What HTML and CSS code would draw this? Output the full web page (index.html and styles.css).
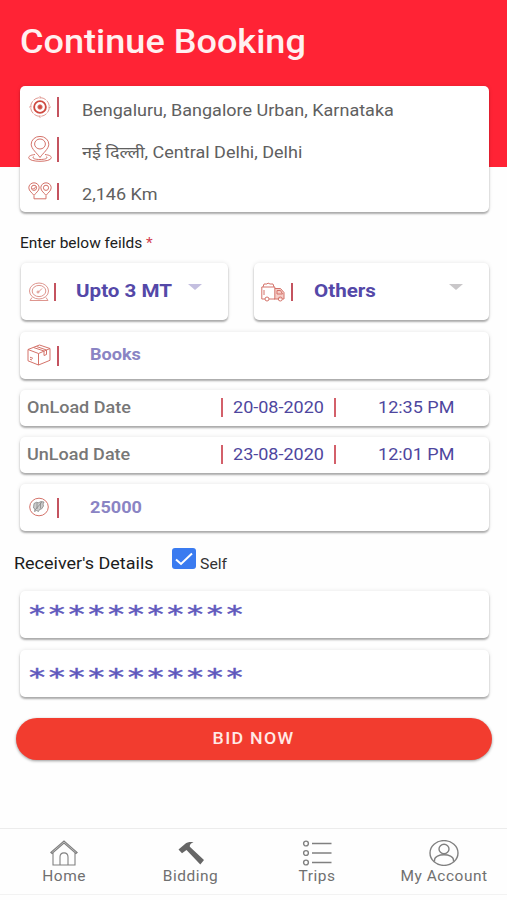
FILE: index.html
```html
<!DOCTYPE html>
<html lang="en">
<head>
<meta charset="utf-8">
<title>Continue Booking</title>
<link rel="stylesheet" href="styles.css">
</head>
<body>
<header class="hero"><h1 class="tx">Continue Booking</h1></header>
<main>
  <section class="card route">
    <div class="route-row first">
      <svg class="ic" viewBox="0 0 24 24"><circle cx="12" cy="12" r="10.200" stroke-dasharray="6.500 1.500" opacity=".8"/><circle cx="12" cy="12" r="6.400" stroke="#cf4a40" stroke-width="2"/><circle cx="12" cy="12" r="2.400" fill="#cf4a40"/><path d="M12 0v3M12 21v3M0 12h3M21 12h3" opacity=".7"/></svg>
      <i class="bar"></i><span class="tx">Bengaluru, Bangalore Urban, Karnataka</span>
    </div>
    <div class="route-row second">
      <svg class="ic tall" viewBox="0 0 24 26"><path d="M12 21.500C9 17 3.200 13 3.200 8.200a8.800 7.800 0 0 1 17.600 0C20.800 13 15 17 12 21.500z"/><ellipse cx="12" cy="8" rx="5.400" ry="5"/><path d="M7 18.500C3 19 .7 20 .7 21.700c0 4.800 22.600 4.800 22.600 0 0-1.700-2.300-2.700-6.300-3.200M6 20.500c-2 1-1 3 6 3s8-2 6-3" /></svg>
      <i class="bar tall"></i><span class="tx">नई दिल्ली, Central Delhi, Delhi</span>
    </div>
    <div class="route-row third">
      <svg class="ic short" viewBox="0 0 24 18"><path d="M6 13.500C4.500 11 .8 9 .8 5.800a5.200 5 0 0 1 10.400 0C11.200 9 7.500 11 6 13.500zM18 13.500c-1.500-2.500-5.200-4.500-5.200-7.700a5.200 5 0 0 1 10.400 0c0 3.200-3.700 5.200-5.200 7.700zM6 14v2.800h12V14"/><circle cx="6" cy="5.800" r="2.600"/><circle cx="18" cy="5.800" r="2.600"/><path d="M4.500 6l1.200 1.200L8 4.500"/></svg>
      <i class="bar short"></i><span class="tx">2,146 Km</span>
    </div>
  </section>

  <p class="hint"><span class="tx">Enter below feilds <b>*</b></span></p>

  <div class="selects">
    <div class="card select weight">
      <svg class="ic pale" viewBox="0 0 22 20"><ellipse cx="11" cy="9" rx="9.500" ry="8"/><ellipse cx="11" cy="9" rx="6.800" ry="5.600"/><path d="M10 10.500l4-4M4 15.500L2 18.500h18l-2-3M6 18.500h10"/><circle cx="10" cy="10" r="1"/></svg>
      <i class="bar"></i><span class="tx">Upto 3 MT</span><i class="caret violet"></i>
    </div>
    <div class="card select truck">
      <svg class="ic" viewBox="0 0 24 20"><path class="tint" d="M14 6.500h5.500l3.500 4V17h-9z"/><path d="M4 17H.8V5h13v12H8M14 6.500h5.500l3.500 4V17h-1.500M17 17h-4M2 5l1-3h3l1-1 2 1h3l1 3M16 8.500v3.500h5.500l-2-3.500zM3 8v5"/><circle cx="6" cy="17" r="2"/><circle cx="19.300" cy="17" r="2"/></svg>
      <i class="bar"></i><span class="tx">Others</span><i class="caret"></i>
    </div>
  </div>

  <div class="card field goods">
    <svg class="ic" viewBox="0 0 24 22"><path d="M1 5.500L12.500 1 23 4.500v11.800L11.500 21 1 16.800zM1 5.500L11.500 9.500 23 4.500M11.500 9.500V21M6.500 3.500l10.500 3.500v4.500l2.500-1V6L9.500 2.500M3 13.200l3 1.200M3 15.200l2 .8"/></svg>
    <i class="bar"></i><span class="tx">Books</span>
  </div>

  <div class="card date">
    <span class="tx name">OnLoad Date</span><i class="bar"></i><span class="tx day">20-08-2020</span><i class="bar"></i><span class="tx time">12:35 PM</span>
  </div>
  <div class="card date">
    <span class="tx name">UnLoad Date</span><i class="bar"></i><span class="tx day">23-08-2020</span><i class="bar"></i><span class="tx time">12:01 PM</span>
  </div>

  <div class="card field price">
    <svg class="ic" viewBox="0 0 22 20"><ellipse cx="11" cy="10" rx="9.300" ry="8.800"/><path class="ink" d="M6 6.500l3-1.500 1 1 3-1.500 3 .5-1 2 .5 2-2 3-2 .5-1 2-2-1-2 1 .5-2.500L5.500 11zM7 13l7-8M9 6v6M12.500 5.500v6"/></svg>
    <i class="bar"></i><span class="tx">25000</span>
  </div>

  <div class="receiver">
    <span class="tx title">Receiver's Details</span>
    <span class="check"><svg viewBox="0 0 24 21"><path d="M4 11.500l5 4.500L20 5.500"/></svg></span>
    <span class="tx self">Self</span>
  </div>

  <div class="card secret raised"><span class="stars">***********</span></div>
  <div class="card secret"><span class="stars">***********</span></div>

  <button class="bid"><span class="tx">BID NOW</span></button>
</main>
<nav>
  <a><svg viewBox="0 0 28 26"><path d="M.8 12.500L14 1l13.200 11.500-1.200 1L14 3 2 13.500zM3 12.500V25h22V12.500M10 25v-8c0-5.500 8-5.500 8 0v8"/></svg><span class="tx">Home</span></a>
  <a><svg viewBox="0 0 28 26"><path class="solid" d="M1.500 9.500L8 4c2-1.800 5-2.200 8.500-1.800-2.500 1-4 2.300-3.700 4.600L27 20l-3.700 4.500L9.500 10 5 13.200z"/></svg><span class="tx">Bidding</span></a>
  <a><svg class="list" viewBox="0 0 30 26"><circle cx="4" cy="3.500" r="2.400"/><circle cx="4" cy="13" r="2.400"/><circle cx="4" cy="22.500" r="2.400"/><path d="M10 3.500h19.500M10 13h19.500M10 22.500h19.500"/></svg><span class="tx">Trips</span></a>
  <a><svg viewBox="0 0 30 26" class="user"><ellipse cx="15" cy="13" rx="14" ry="12.400"/><ellipse cx="15" cy="9" rx="5" ry="4.700"/><path d="M5.500 21.500V20c0-7 19-7 19 0v1.500"/></svg><span class="tx">My Account</span></a>
</nav>
</body>
</html>
```
FILE: styles.css
```css
* { box-sizing: border-box; }
body {
  margin: 0;
  height: 900px;
  overflow: hidden;
  display: flex;
  flex-direction: column;
  background: #fefefe;
  font-family: Roboto, "Noto Sans", sans-serif;
  color: #606060;
}
.tx {
  display: inline-block;
  white-space: nowrap;
  transform: scaleX(1.09);
  transform-origin: left center;
}
.hero { height: 167px; padding: 22px 20px; background: #ff2335; flex: none; }
h1 { margin: 0; font-size: 33.100px; line-height: 40px; font-weight: 500; color: #fff0f0; }
main { display: flex; flex-direction: column; padding: 0 18.500px 0 20px; margin-top: -81px; }
.card {
  background: #fff;
  border-radius: 5px;
  box-shadow: 0 2px 2px rgba(0,0,0,.3), 0 0 4px rgba(0,0,0,.1);
  display: flex;
  align-items: center;
}
.ic { width: 24px; height: 22px; flex: none; fill: none; stroke: #d4736a; stroke-width: 1; }
.tint { fill: #f6cfc9; stroke: none; }
.bar { display: block; width: 2px; height: 20px; background: #c4535f; flex: none; }
.route { height: 126px; flex-direction: column; align-items: stretch; font-size: 16.550px; }
.route-row { display: flex; align-items: center; height: 42px; padding-left: 7.500px; }
.route-row .bar { margin: 0 23px 0 5.500px; }
.first .tx { margin-top: 7px; }
.second .tx { margin-top: 5px; }
.third .tx { margin-top: 7px; }
.ic.tall { height: 26px; }
.bar.tall { height: 25px; }
.ic.short { height: 18px; }
.bar.short { height: 17px; }
.hint { margin: 21px 0 0; font-size: 14.200px; line-height: 20px; height: 30px; color: #202020; }
.hint b { font-weight: 400; color: #d34050; }
.selects { display: flex; justify-content: space-between; margin-bottom: 12px; }
.select { height: 57px; font-size: 18.900px; font-weight: 700; color: #5448a8; }
.select .tx { margin-top: -3px; }
.weight { width: 207px; padding-left: 7px; margin-left: 1px; }
.weight .ic { width: 22px; height: 20px; }
.select .bar { height: 18px; }
.weight .bar { margin: 0 20px 0 4px; }
.truck { width: 235px; padding-left: 7px; }
.truck .ic { height: 20px; }
.truck .bar { margin: 0 21px 0 6px; }
.caret { border: 7px solid transparent; border-top: 6px solid #c9c7c9; border-bottom: 0; margin: -9px 26px 0 auto; }
.violet { border-top-color: #c4bfe0; }
.pale { opacity: .75; }
.field { height: 47px; padding-left: 7px; margin-bottom: 11px; font-size: 16.600px; font-weight: 700; color: #8a84c4; }
.goods .tx { margin-top: -2px; }
.goods .ic, .goods .bar { margin-top: -2px; }
.field .bar { margin: 0 31px 0 6px; }
.price .ic { height: 20px; margin-top: -1px; }
.ink { stroke: #888; fill: #ccc; stroke-width: .8; }
.date { height: 36px; margin-bottom: 11px; padding: 0 0 1px 7px; font-size: 16.550px; color: #4e469e; }
.date .bar { background: #d3606a; height: 19px; }
.name { width: 194px; font-weight: 500; color: #777; }
.day { width: 101px; margin-left: 10px; }
.time { margin-left: 42px; }
.receiver { display: flex; height: 49px; margin-left: -6px; color: #1c1c1c; }
.title { width: 158px; font-size: 16.500px; line-height: 20px; margin-top: 12px; }
.check { width: 24px; height: 21px; margin-top: 6px; border-radius: 3px; background: #3a7bf0; }
.check svg { display: block; width: 24px; height: 21px; fill: none; stroke: #fff; stroke-width: 2; }
.self { font-size: 14.500px; line-height: 18px; margin: 14px 0 0 4px; color: #333; }
.secret { height: 47px; margin-bottom: 12px; padding-left: 9px; }
.stars {
  display: inline-block;
  font-family: "DejaVu Sans", sans-serif;
  font-size: 23px;
  line-height: 30px;
  letter-spacing: 2.600px;
  color: #6058bd;
  -webkit-text-stroke: .4px #6058bd;
  margin-top: 6px;
  transform: scaleX(1.4);
  transform-origin: left center;
}
.raised .stars { margin-top: -2px; }
.bid {
  height: 42px;
  margin: 9px -3.500px 0 -4px;
  border: 0;
  border-radius: 21px;
  background: #f23c2f;
  box-shadow: 0 1px 3px rgba(0,0,0,.4);
  font: 500 16.300px/20px Roboto, sans-serif;
  letter-spacing: 1.200px;
  color: #ffe9e6;
  padding-bottom: 2px;
}
.bid .tx { transform-origin: center; }
nav {
  margin-top: auto;
  margin-bottom: 5px;
  height: 67px;
  flex: none;
  border-top: 1px solid #ececec;
  border-bottom: 1px solid #f2f2f2;
  display: grid;
  grid-template-columns: repeat(4, 1fr);
}
nav a { display: flex; flex-direction: column; align-items: center; padding: 11px 0 0 1px; font-size: 14.200px; line-height: 20px; letter-spacing: .5px; color: #707070; }
nav .tx { transform-origin: center; }
nav svg { width: 28px; height: 26px; fill: none; stroke: #808080; stroke-width: 1.100; }
nav svg.list, nav svg.user { width: 30px; stroke-width: 1.400; }
nav .solid { fill: #666; stroke: none; }
```
